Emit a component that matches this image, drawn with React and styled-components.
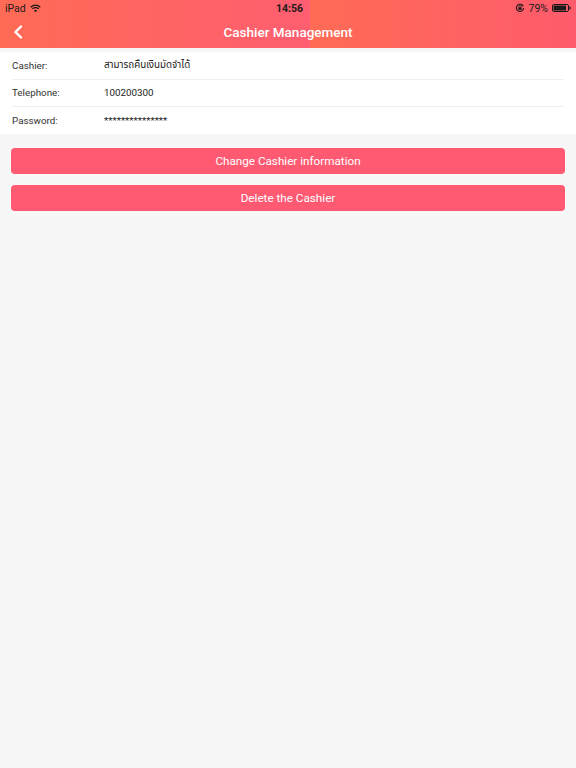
import React from 'react';
import styled, { createGlobalStyle } from 'styled-components';

const GlobalStyle = createGlobalStyle`
  html, body {
    margin: 0;
    padding: 0;
    background: #f7f7f7;
    font-family: Roboto, "Noto Sans Thai", "Noto Sans", "Liberation Sans", sans-serif;
  }
`;

const Page = styled.div`
  width: 576px;
  min-height: 768px;
  background: #f7f7f7;
`;

const Header = styled.header`
  height: 48px;
  background: linear-gradient(
    90deg,
    #ff6b55 0,
    #ff5e70 310px,
    #ff6b55 310px,
    #ff5b6c 576px
  );
  display: flex;
  flex-direction: column;
`;

const StatusBar = styled.div`
  height: 16px;
  display: flex;
  align-items: center;
  padding: 0 5px;
  font-size: 10.5px;
  color: #1a1a1a;
`;

const StatusSide = styled.div`
  flex: 1;
  display: flex;
  align-items: center;
  gap: 4px;
  justify-content: ${(p) => (p.right ? 'flex-end' : 'flex-start')};
`;

const Clock = styled.div`
  font-weight: 700;
  margin-left: 3px;
`;

const NavBar = styled.div`
  flex: 1;
  display: flex;
  align-items: center;
  padding: 0 12px;
  position: relative;
`;

const BackButton = styled.button`
  border: 0;
  background: none;
  padding: 0;
  display: flex;
  color: #fff;
  cursor: pointer;
`;

const Title = styled.h1`
  position: absolute;
  left: 0;
  right: 0;
  text-align: center;
  margin: 0;
  font-size: 13.5px;
  font-weight: 500;
  color: #fff;
  pointer-events: none;
`;

const InfoList = styled.div`
  background: #fff;
  margin-top: 4px;
  padding: 0 12px;
`;

const InfoRow = styled.div`
  height: 26.5px;
  display: flex;
  align-items: center;
  font-size: 9.8px;
  color: #222;
  & + & {
    border-top: 1px solid #eeeeee;
  }
`;

const Label = styled.span`
  width: 92px;
  color: #333;
`;

const Value = styled.span`
  color: #222;
`;

const Actions = styled.div`
  padding: 14px 11px;
  display: flex;
  flex-direction: column;
  gap: 11px;
`;

const ActionButton = styled.button`
  height: 26px;
  border: 0;
  border-radius: 4px;
  background: #ff5a72;
  color: #fff;
  font-family: inherit;
  font-size: 11.7px;
  cursor: pointer;
`;

const WifiIcon = () => (
  <svg width="11" height="9" viewBox="0 0 12 9">
    <path d="M6 8.5 L4.3 6.6 A2.4 2.4 0 0 1 7.7 6.6 Z" fill="#1a1a1a" />
    <path d="M2.6 4.9 A4.8 4.8 0 0 1 9.4 4.9" stroke="#1a1a1a" strokeWidth="1.4" fill="none" />
    <path d="M0.8 3.1 A7.3 7.3 0 0 1 11.2 3.1" stroke="#1a1a1a" strokeWidth="1.4" fill="none" />
  </svg>
);

const LockIcon = () => (
  <svg width="10" height="10" viewBox="0 0 10 10">
    <path d="M7.6 2.4 A3.6 3.6 0 1 0 8.6 5" stroke="#1a1a1a" strokeWidth="1.1" fill="none" />
    <path d="M7 1.2 L9 2.8 L6.8 3.6 Z" fill="#1a1a1a" />
    <rect x="3.4" y="4.3" width="3.2" height="2.6" fill="#1a1a1a" />
    <path d="M3.9 4.4 V3.7 A1.1 1.1 0 0 1 6.1 3.7 V4.4" stroke="#1a1a1a" strokeWidth="0.8" fill="none" />
  </svg>
);

const BatteryIcon = () => (
  <svg width="19" height="8" viewBox="0 0 19 8">
    <rect x="0.5" y="0.5" width="16" height="7" rx="1.5" stroke="#1a1a1a" fill="none" />
    <rect x="1.5" y="1.5" width="12.5" height="5" rx="0.5" fill="#1a1a1a" />
    <rect x="17.3" y="2.6" width="1.3" height="2.8" rx="0.5" fill="#1a1a1a" />
  </svg>
);

const BackIcon = () => (
  <svg width="12" height="14" viewBox="0 0 12 14">
    <path d="M9 1.5 L3.5 7 L9 12.5" stroke="#fff" strokeWidth="2.4" fill="none" strokeLinecap="round" strokeLinejoin="round" />
  </svg>
);

const cashier = {
  name: 'สามารถคืนเงินมัดจำได้',
  telephone: '100200300',
  password: '***************',
};

const App = () => {
  const rows = [
    { label: 'Cashier:', value: cashier.name },
    { label: 'Telephone:', value: cashier.telephone },
    { label: 'Password:', value: cashier.password },
  ];
  return (
    <Page>
      <GlobalStyle />
      <Header>
        <StatusBar>
          <StatusSide>
            iPad <WifiIcon />
          </StatusSide>
          <Clock>14:56</Clock>
          <StatusSide right>
            <LockIcon /> 79% <BatteryIcon />
          </StatusSide>
        </StatusBar>
        <NavBar>
          <BackButton aria-label="Back">
            <BackIcon />
          </BackButton>
          <Title>Cashier Management</Title>
        </NavBar>
      </Header>
      <InfoList>
        {rows.map((row) => (
          <InfoRow key={row.label}>
            <Label>{row.label}</Label>
            <Value>{row.value}</Value>
          </InfoRow>
        ))}
      </InfoList>
      <Actions>
        <ActionButton>Change Cashier information</ActionButton>
        <ActionButton>Delete the Cashier</ActionButton>
      </Actions>
    </Page>
  );
};

export default App;
